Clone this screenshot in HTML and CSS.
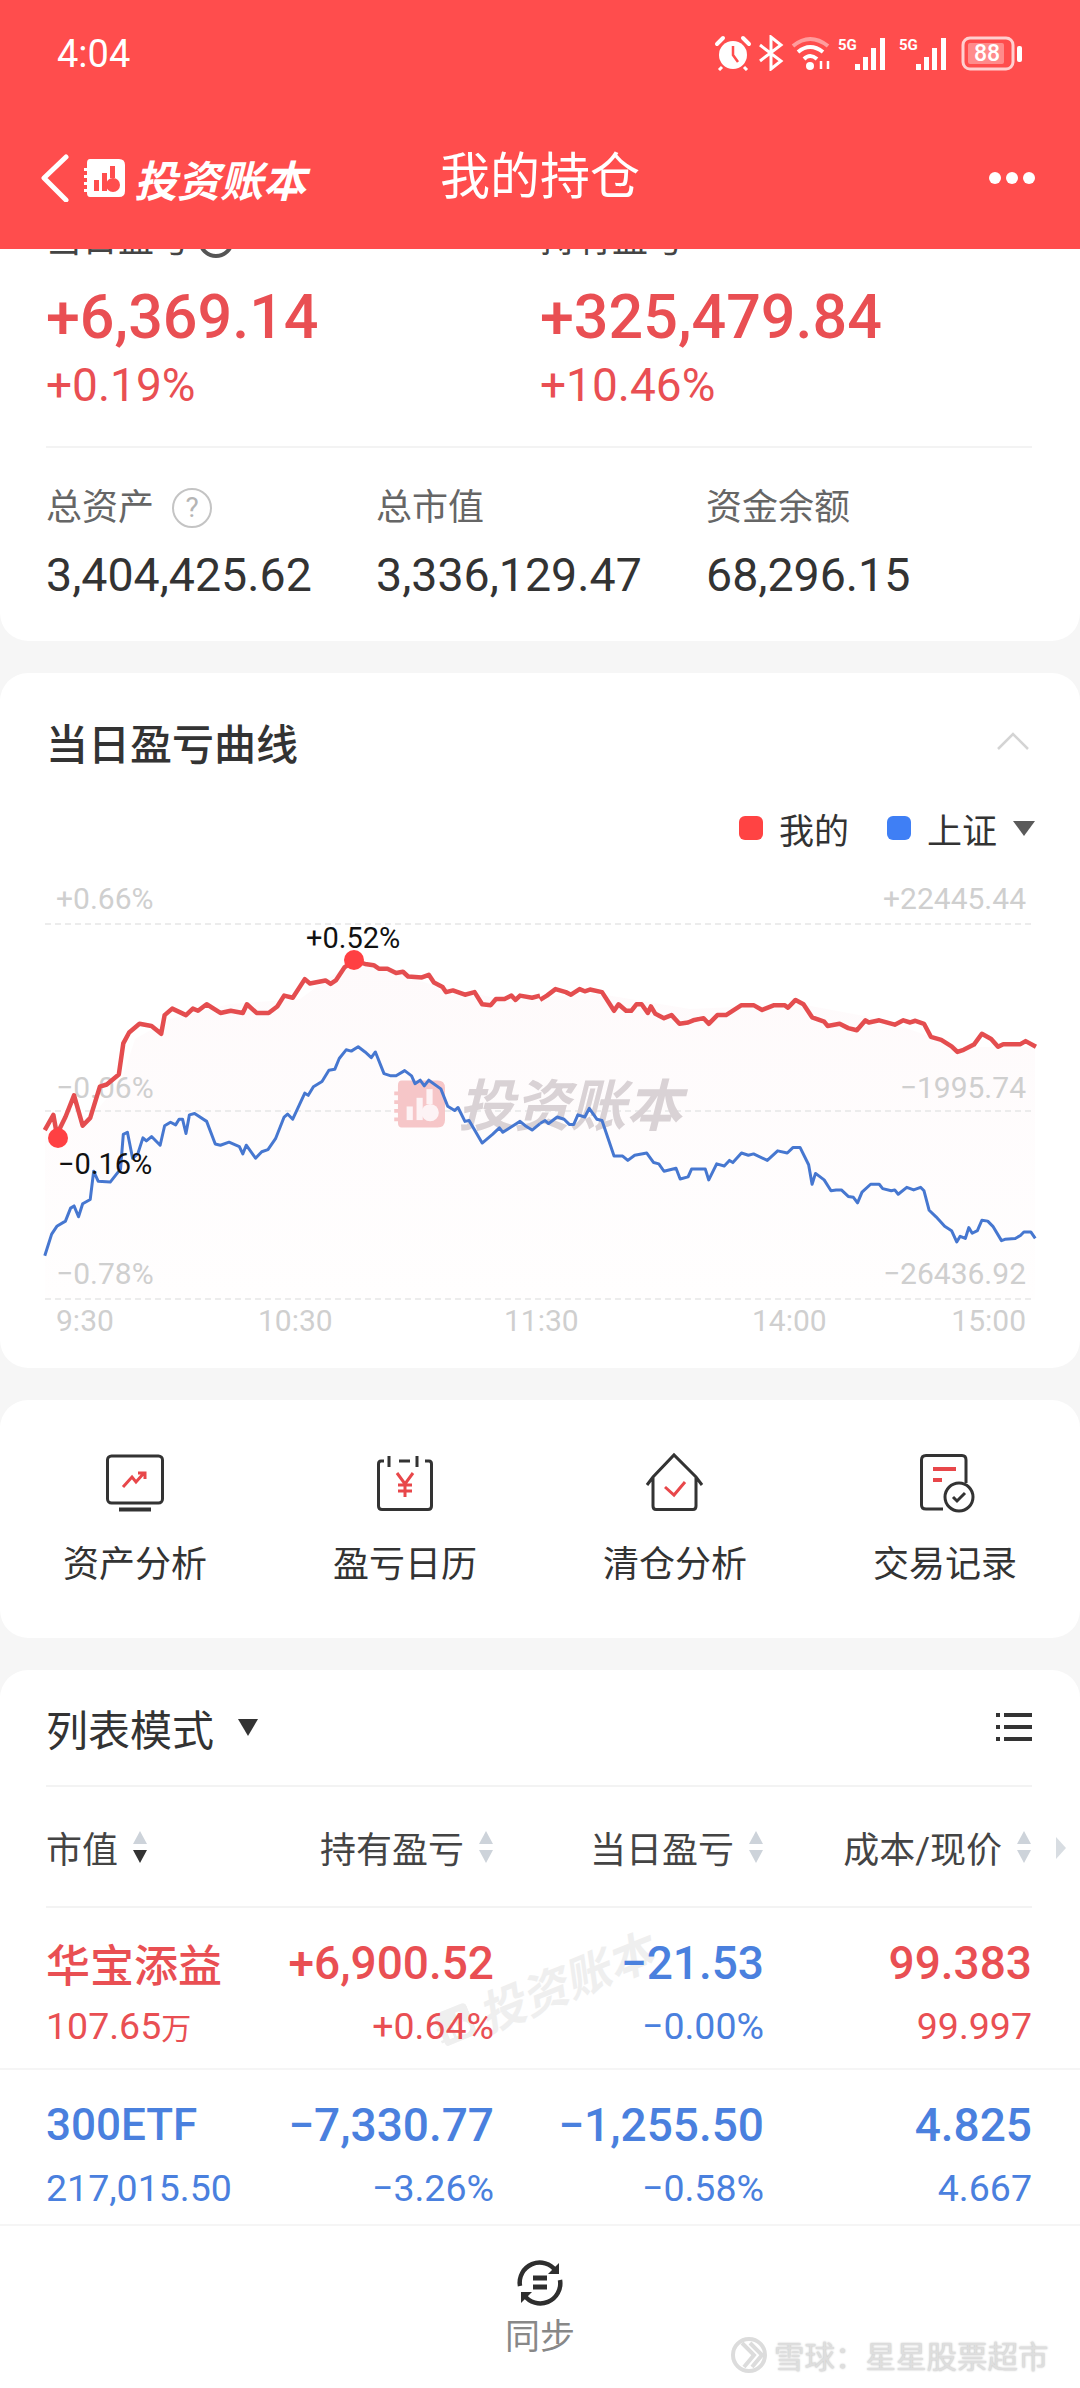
FILE: index.html
```html
<!DOCTYPE html>
<html lang="zh-CN">
<head>
  <meta charset="UTF-8">
  <meta name="viewport" content="width=device-width, initial-scale=1.0">
  <title>我的持仓</title>
  <link rel="stylesheet" href="styles.css">
</head>
<body>

<svg class="defs" width="0" height="0">
  <symbol id="logo" viewBox="0 0 42 38">
    <path d="M7 0H36Q42 0 42 6V32Q42 38 36 38H7Q4 38 4 34V33H1V30H4V26H1V23H4V19H1V16H4V12H1V9H4V4Q4 0 7 0Z"/>
    <g class="logo-cut">
      <rect x="11" y="21" width="5" height="11"/>
      <rect x="19" y="14" width="5" height="18"/>
      <rect x="27" y="7" width="5" height="12"/>
      <circle cx="30" cy="26" r="7"/>
    </g>
  </symbol>
</svg>

<div class="page">

  <!-- Red header -->
  <header class="header">
    <div class="status-bar">
      <span class="time">4:04</span>
      <svg class="status-icons" width="310" height="36" viewBox="0 0 310 36">
        <!-- alarm -->
        <circle cx="20" cy="20" r="14" fill="#fff"/>
        <path d="M20 11V20L25 27" fill="none" stroke="#ff4d4d" stroke-width="2.5"/>
        <path d="M4 9L10 3M36 9L30 3" stroke="#fff" stroke-width="4" stroke-linecap="round"/>
        <path d="M9 32L6 35M31 32L34 35" stroke="#fff" stroke-width="3"/>
        <!-- bluetooth -->
        <path d="M47 10L68 26L58 34V2L68 10L47 26" fill="none" stroke="#fff" stroke-width="3"/>
        <!-- wifi -->
        <path d="M80 11Q97 -3 115 11" fill="none" stroke="#fff" stroke-opacity=".45" stroke-width="4"/>
        <path d="M85 17Q97 7 110 17M91 24Q97 18 104 24" fill="none" stroke="#fff" stroke-width="4"/>
        <circle cx="97" cy="31" r="4" fill="#fff"/>
        <path d="M108 34V26M115 26V34" stroke="#fff" stroke-width="2.5"/>
        <!-- sim 1 -->
        <text class="net" x="125" y="15">5G</text>
        <g fill="#fff">
          <rect x="142" y="29" width="5" height="6"/>
          <rect x="150" y="22" width="5" height="13"/>
          <rect x="158" y="13" width="5" height="22"/>
          <rect x="167" y="3" width="5" height="32"/>
        </g>
        <!-- sim 2 -->
        <text class="net" x="186" y="15">5G</text>
        <g fill="#fff">
          <rect x="203" y="29" width="5" height="6"/>
          <rect x="211" y="22" width="5" height="13"/>
          <rect x="219" y="13" width="5" height="22"/>
          <rect x="228" y="3" width="5" height="32"/>
        </g>
        <!-- battery -->
        <rect x="250" y="3" width="50" height="31" rx="7" fill="none" stroke="#ffd0d0" stroke-width="3"/>
        <rect x="255" y="8" width="36" height="21" rx="2" fill="#fff" fill-opacity=".35"/>
        <text class="batt" x="274" y="26">88</text>
        <rect x="304" y="11" width="5" height="16" rx="2" fill="#fff"/>
      </svg>
    </div>
    <div class="nav-bar">
      <div class="nav-left">
        <svg width="30" height="48" viewBox="0 0 30 48"><path d="M26 3L4 24L26 46" fill="none" stroke="#fff" stroke-width="5" stroke-linecap="round" stroke-linejoin="round"/></svg>
        <svg class="nav-logo" width="42" height="38"><use href="#logo"/></svg>
        <span class="nav-brand">投资账本</span>
      </div>
      <span class="nav-title">我的持仓</span>
      <div class="nav-more"><i></i><i></i><i></i></div>
    </div>
  </header>

  <main class="main">

    <!-- Summary -->
    <section class="card summary">
      <div class="summary-top">
        <div class="summary-col">
          <div class="label label-dark">当日盈亏<span class="help help-dark">?</span></div>
          <div class="big red">+6,369.14</div>
          <div class="pct red">+0.19%</div>
        </div>
        <div class="summary-col">
          <div class="label label-dark">持有盈亏</div>
          <div class="big red">+325,479.84</div>
          <div class="pct red">+10.46%</div>
        </div>
      </div>
      <div class="summary-bottom">
        <div>
          <div class="label">总资产<span class="help">?</span></div>
          <div class="amount">3,404,425.62</div>
        </div>
        <div>
          <div class="label">总市值</div>
          <div class="amount">3,336,129.47</div>
        </div>
        <div>
          <div class="label">资金余额</div>
          <div class="amount">68,296.15</div>
        </div>
      </div>
    </section>

    <!-- Chart -->
    <section class="card chart-card">
      <div class="chart-title">
        <h3>当日盈亏曲线</h3>
        <svg width="34" height="20" viewBox="0 0 34 20"><path d="M2 18L17 3L32 18" fill="none" stroke="#d4d4d4" stroke-width="2.5"/></svg>
      </div>
      <div class="legend">
        <i class="swatch swatch-red"></i><span>我的</span>
        <i class="swatch swatch-blue"></i><span>上证</span>
        <i class="legend-arrow"></i>
      </div>
      <svg class="chart" width="1080" height="500" viewBox="0 860 1080 500">
        <defs>
          <linearGradient id="tint" x1="0" y1="0" x2="0" y2="1">
            <stop offset="0" stop-color="#fefafb"/>
            <stop offset="1" stop-color="#fffefe"/>
          </linearGradient>
        </defs>
        <polygon fill="url(#tint)" points="45,1131 70,1110 90,1120 122,1080 135,1040 170,1020 230,1005 300,1000 354,961 430,985 500,1000 600,995 690,1010 800,1005 880,1020 960,1048 1035,1048 1035,1300 45,1300"/>

        <g class="grid">
          <line x1="45" y1="925" x2="1032" y2="925"/>
          <line x1="45" y1="1112" x2="1032" y2="1112"/>
          <line x1="45" y1="1300" x2="1032" y2="1300"/>
        </g>

        <text class="axis" x="56" y="910">+0.66%</text>
        <text class="axis" x="56" y="1099">−0.06%</text>
        <text class="axis" x="56" y="1285">−0.78%</text>
        <text class="axis end" x="1026" y="910">+22445.44</text>
        <text class="axis end" x="1026" y="1099">−1995.74</text>
        <text class="axis end" x="1026" y="1285">−26436.92</text>
        <text class="axis" x="56" y="1332">9:30</text>
        <text class="axis" x="258" y="1332">10:30</text>
        <text class="axis" x="504" y="1332">11:30</text>
        <text class="axis" x="752" y="1332">14:00</text>
        <text class="axis end" x="1026" y="1332">15:00</text>

        <!-- watermark -->
        <svg class="mark-logo" x="393" y="1078" width="52" height="54"><use href="#logo"/></svg>
        <text class="mark-text" x="458" y="1127">投资账本</text>

        <!-- curves, points traced in reference crop units -->
        <g transform="translate(0 680) scale(.3444 .4337)">
          <polyline class="line-blue" points="130,1330 150,1280 165,1262 190,1250 205,1220 215,1215 228,1240 240,1210 262,1200 272,1135 285,1158 320,1160 340,1140 350,1130 358,1050 370,1045 385,1105 400,1095 415,1058 425,1065 440,1055 465,1075 478,1030 495,1022 510,1028 520,1015 530,1015 540,1048 550,1005 565,1002 600,1020 625,1072 640,1075 665,1068 695,1078 705,1095 715,1075 742,1105 760,1090 778,1085 800,1060 825,1010 835,1003 850,1015 885,955 895,960 910,940 935,928 955,902 972,900 985,875 1005,855 1020,858 1040,848 1060,860 1078,873 1090,860 1115,910 1135,915 1150,915 1175,903 1195,915 1205,933 1220,925 1232,938 1245,925 1280,945 1300,985 1320,995 1330,988 1350,1020 1362,1018 1400,1070 1430,1050 1450,1035 1460,1045 1500,1025 1510,1020 1525,1030 1545,1040 1568,1025"/>
          <polyline class="line-red" points="130,1040 155,1005 165,1050 190,1010 215,960 240,1030 262,1012 290,940 310,935 345,912 358,840 375,815 405,795 440,800 468,818 478,775 500,760 540,775 560,760 575,765 600,750 640,770 670,765 705,770 717,750 745,770 780,770 805,755 825,730 850,735 885,692 900,702 945,695 960,703 975,695 1000,665 1028,650 1060,657 1085,660 1100,668 1125,668 1150,678 1170,675 1185,686 1225,688 1245,682 1260,700 1285,710 1295,722 1315,718 1350,728 1378,722 1400,750 1425,752 1440,738 1465,738 1485,730 1497,740 1510,730 1545,735 1568,730"/>
        </g>
        <g transform="translate(540 680) scale(.3444 .4337)">
          <polyline class="line-blue" points="0,1025 15,1018 25,1025 50,1010 70,1015 85,1027 98,1027 110,1005 130,1010 143,990 165,1015 180,1018 215,1100 240,1100 255,1110 275,1098 310,1093 330,1115 345,1118 360,1135 395,1128 407,1153 430,1148 440,1130 480,1130 490,1155 513,1118 535,1123 550,1110 560,1115 585,1093 605,1098 620,1095 660,1110 690,1088 718,1093 735,1080 755,1080 780,1120 790,1165 800,1140 825,1155 845,1180 860,1178 875,1178 895,1193 910,1195 922,1208 935,1183 960,1165 985,1165 995,1175 1020,1180 1030,1178 1040,1188 1065,1172 1085,1178 1105,1172 1115,1180 1130,1225 1150,1240 1175,1262 1195,1272 1210,1298 1220,1285 1235,1290 1245,1265 1255,1278 1270,1272 1283,1248 1300,1250 1315,1262 1340,1295 1350,1292 1380,1290 1395,1283 1405,1275 1425,1275 1438,1290"/>
          <polyline class="line-red" points="0,740 20,730 45,715 75,722 90,728 115,715 130,720 145,716 180,722 215,765 228,750 250,765 265,765 280,750 295,750 313,770 322,755 335,772 360,782 382,775 405,795 430,792 445,787 475,782 490,795 515,775 540,775 585,752 620,752 645,763 680,752 710,752 720,758 742,740 765,750 790,780 825,790 835,800 870,795 895,805 920,810 945,787 955,792 985,787 1030,797 1055,787 1075,792 1090,788 1115,795 1135,825 1165,832 1195,847 1212,860 1230,855 1260,843 1283,818 1310,830 1330,848 1345,842 1395,842 1410,835 1440,848"/>
        </g>

        <circle class="dot" cx="354" cy="961" r="10"/>
        <circle class="dot" cx="58" cy="1139" r="10"/>
        <text class="note" x="306" y="949">+0.52%</text>
        <text class="note" x="58" y="1175">−0.16%</text>
      </svg>
    </section>

    <!-- Shortcuts -->
    <section class="card shortcuts">
      <div class="shortcut">
        <svg width="64" height="64" viewBox="0 0 64 64" fill="none" stroke-width="3">
          <rect class="ico" x="4.5" y="6" width="55" height="47" rx="4"/>
          <path class="ico" d="M16 59.5H48" stroke-width="4"/>
          <path class="ico-red" d="M20 37L29 27L33 32L41 23M35 23H42V29"/>
        </svg>
        <span>资产分析</span>
      </div>
      <div class="shortcut">
        <svg width="64" height="64" viewBox="0 0 64 64" fill="none" stroke-width="3">
          <path class="ico" d="M11 11H8Q5.5 11 5.5 14V56Q5.5 59.5 9 59.5H55Q58.5 59.5 58.5 56V14Q58.5 11 56 11H52M16 6V17M44 6V17M26 11H37"/>
          <path class="ico-red" d="M24 23L32 34L40 23M32 34V47M25 35H39M25 41H39"/>
        </svg>
        <span>盈亏日历</span>
      </div>
      <div class="shortcut">
        <svg width="64" height="64" viewBox="0 0 64 64" fill="none" stroke-width="3">
          <path class="ico" d="M4 35L10 27L31 5L53 27L59 35M10 27V56Q10 59.5 13 59.5H50Q53 59.5 53 56V27"/>
          <path class="ico-red" d="M22 37L31 45L42 32"/>
        </svg>
        <span>清仓分析</span>
      </div>
      <div class="shortcut">
        <svg width="64" height="64" viewBox="0 0 64 64" fill="none" stroke-width="3">
          <path class="ico" d="M30 59H13Q8.5 59 8.5 55V10Q8.5 5.5 13 5.5H49Q53 5.5 53 10V33"/>
          <path class="ico-red" d="M20 19H43M20 30H29" stroke-width="4"/>
          <circle class="ico" cx="46" cy="47" r="14"/>
          <path class="ico" d="M40 47L44 51L52 43"/>
        </svg>
        <span>交易记录</span>
      </div>
    </section>

    <!-- Holdings list -->
    <section class="card holdings">
      <div class="list-mark">
        <svg width="38" height="36"><use href="#logo"/></svg>
        <span>投资账本</span>
      </div>

      <div class="list-head">
        <div class="list-mode"><span>列表模式</span><i class="mode-arrow"></i></div>
        <svg width="36" height="28" viewBox="0 0 36 28" fill="#333">
          <rect x="0" y="0" width="4" height="4"/><rect x="8" y="0" width="28" height="4"/>
          <rect x="0" y="12" width="4" height="4"/><rect x="8" y="12" width="28" height="4"/>
          <rect x="0" y="24" width="4" height="4"/><rect x="8" y="24" width="28" height="4"/>
        </svg>
      </div>

      <div class="table-head">
        <div class="th th-left">市值<svg class="sort" width="16" height="34" viewBox="0 0 16 34"><path d="M8 1L15 14H1Z" fill="#cdd3da"/><path d="M8 33L1 20H15Z" fill="#333"/></svg></div>
        <div class="th">持有盈亏<svg class="sort" width="16" height="34" viewBox="0 0 16 34"><path d="M8 1L15 14H1Z" fill="#cdd3da"/><path d="M8 33L1 20H15Z" fill="#cdd3da"/></svg></div>
        <div class="th">当日盈亏<svg class="sort" width="16" height="34" viewBox="0 0 16 34"><path d="M8 1L15 14H1Z" fill="#cdd3da"/><path d="M8 33L1 20H15Z" fill="#cdd3da"/></svg></div>
        <div class="th">成本/现价<svg class="sort" width="16" height="34" viewBox="0 0 16 34"><path d="M8 1L15 14H1Z" fill="#cdd3da"/><path d="M8 33L1 20H15Z" fill="#cdd3da"/></svg></div>
        <i class="more-arrow"></i>
      </div>

      <div class="stock">
        <div class="name red">华宝添益</div>
        <div class="num red">+6,900.52</div>
        <div class="num blue">−21.53</div>
        <div class="num red">99.383</div>
        <div class="sub red">107.65<span class="unit">万</span></div>
        <div class="sub sub-right red">+0.64%</div>
        <div class="sub sub-right blue">−0.00%</div>
        <div class="sub sub-right red">99.997</div>
      </div>

      <div class="stock">
        <div class="name-en blue">300ETF</div>
        <div class="num blue">−7,330.77</div>
        <div class="num blue">−1,255.50</div>
        <div class="num blue">4.825</div>
        <div class="sub blue">217,015.50</div>
        <div class="sub sub-right blue">−3.26%</div>
        <div class="sub sub-right blue">−0.58%</div>
        <div class="sub sub-right blue">4.667</div>
      </div>
    </section>
  </main>

  <!-- Bottom action -->
  <footer class="footer">
    <svg width="48" height="48" viewBox="0 0 48 48" fill="none" stroke="#2e2e2e" stroke-width="4.5">
      <path d="M4 27A20 20 0 0 1 40 12"/>
      <path d="M44 21A20 20 0 0 1 8 36"/>
      <path d="M43 4V15H32L43 4Z" fill="#2e2e2e" stroke="none"/>
      <path d="M5 44V33H16L5 44Z" fill="#2e2e2e" stroke="none"/>
      <path d="M17 19H31M17 28H31" stroke-width="5"/>
    </svg>
    <span>同步</span>
  </footer>

  <div class="snow-mark">
    <svg width="38" height="52" viewBox="0 0 38 52" fill="none" stroke="#dcdcdc" stroke-width="4"><circle cx="19" cy="26" r="16"/><path d="M12 14L24 26L14 38M20 14L32 26L22 38"/></svg>
    <span>雪球：星星股票超市</span>
  </div>
</div>

</body>
</html>
```

FILE: styles.css
```css
* {
  box-sizing: border-box;
}
html, body {
  margin: 0;
  padding: 0;
}
body {
  font-family: Roboto, "Noto Sans CJK SC", sans-serif;
  color: #333;
  background: #f6f6f6;
}
h3 {
  margin: 0;
  font-size: 42px;
  font-weight: 500;
}
.defs {
  position: absolute;
}
.logo-cut {
  fill: var(--cut, #ff4d4d);
}
.page {
  position: relative;
  width: 1080px;
  height: 2388px;
  display: flex;
  flex-direction: column;
  overflow: hidden;
}
.red {
  color: #e94f53;
}
.blue {
  color: #4a80de;
}

/* header */
.header {
  height: 249px;
  flex: none;
  background: #ff4d4d;
  color: #fff;
}
.status-bar {
  height: 106px;
  padding: 35px 55px 0 57px;
  display: flex;
  justify-content: space-between;
  align-items: flex-start;
}
.time {
  font-size: 38px;
  line-height: 38px;
}
.status-icons {
  margin-right: 2px;
}
.net {
  font-size: 15px;
  font-weight: 700;
  fill: #fff;
}
.batt {
  font-size: 23px;
  font-weight: 500;
  fill: #fff;
  text-anchor: middle;
}
.nav-bar {
  height: 143px;
  padding: 0 45px 0 40px;
  display: flex;
  align-items: center;
  position: relative;
}
.nav-left {
  display: flex;
  align-items: center;
}
.nav-logo {
  margin-left: 13px;
  fill: #fff;
}
.nav-brand {
  margin-left: 9px;
  font-size: 43px;
  font-weight: 700;
  font-style: italic;
}
.nav-title {
  position: absolute;
  left: 0;
  right: 0;
  top: 0;
  line-height: 143px;
  text-align: center;
  font-size: 50px;
}
.nav-more {
  margin-left: auto;
  display: flex;
  gap: 5px;
}
.nav-more i {
  width: 12px;
  height: 12px;
  border-radius: 50%;
  background: #fff;
}

/* main area */
.main {
  flex: 1;
  min-height: 0;
  overflow: hidden;
  display: flex;
  flex-direction: column;
  gap: 32px;
}
.card {
  background: #fff;
  border-radius: 28px;
  flex: none;
}

/* summary */
.summary {
  margin-top: -29px;
  height: 421px;
  padding: 0 48px 0 46px;
  border-radius: 0 0 28px 28px;
}
.summary-top {
  display: grid;
  grid-template-columns: 494px 1fr;
  height: 228px;
  border-bottom: 2px solid #f3f3f3;
}
.label {
  height: 40px;
  line-height: 40px;
  font-size: 36px;
  color: #666;
  display: flex;
  align-items: center;
}
.label-dark {
  color: #444;
}
.help {
  width: 40px;
  height: 40px;
  margin-left: 18px;
  border: 2px solid #c4c4c4;
  border-radius: 50%;
  color: #b5b5b5;
  font-size: 28px;
  line-height: 36px;
  text-align: center;
}
.help-dark {
  width: 36px;
  height: 36px;
  margin-left: 8px;
  border: 4px solid #555;
  color: #555;
  font-size: 20px;
  line-height: 28px;
}
.big {
  margin-top: 21px;
  font-size: 61px;
  line-height: 72px;
  font-weight: 500;
}
.pct {
  margin-top: 7px;
  font-size: 46px;
  line-height: 50px;
}
.summary-bottom {
  margin-top: 40px;
  display: grid;
  grid-template-columns: 330px 330px 1fr;
}
.amount {
  margin-top: 17px;
  font-size: 46.5px;
  line-height: 60px;
  color: #333;
}

/* chart */
.chart-card {
  height: 695px;
  padding-top: 38px;
}
.chart-title {
  height: 60px;
  padding: 0 50px 0 46px;
  display: flex;
  justify-content: space-between;
  align-items: center;
}
.legend {
  height: 40px;
  margin-top: 37px;
  padding-right: 45px;
  display: flex;
  justify-content: flex-end;
  align-items: center;
  font-size: 35px;
  color: #333;
}
.swatch {
  width: 24px;
  height: 24px;
  margin-right: 16px;
  border-radius: 6px;
}
.swatch-red {
  background: #ff4343;
}
.swatch-blue {
  margin-left: 38px;
  background: #3f7ff5;
}
.legend-arrow {
  margin-left: 16px;
  width: 0;
  height: 0;
  border-left: 11px solid transparent;
  border-right: 11px solid transparent;
  border-top: 15px solid #5a5a5a;
}
.chart {
  display: block;
  margin-top: 11px;
}
.grid line {
  stroke: #e6e6e6;
  stroke-width: 1.5;
  stroke-dasharray: 6 4;
}
.axis {
  font-size: 30px;
  fill: #cfcfcf;
}
.end {
  text-anchor: end;
}
.mark-logo {
  fill: #f6c6c8;
  --cut: #fdf3f5;
}
.mark-text {
  font-size: 56px;
  font-weight: 700;
  font-style: italic;
  fill: #d9d2d5;
}
.line-red,
.line-blue {
  fill: none;
  stroke-linejoin: round;
  vector-effect: non-scaling-stroke;
}
.line-red {
  stroke: #e44d4f;
  stroke-width: 4.5;
}
.line-blue {
  stroke: #4677d0;
  stroke-width: 3;
}
.dot {
  fill: #ff4043;
}
.note {
  font-size: 29px;
  fill: #111;
}

/* shortcuts */
.shortcuts {
  height: 238px;
  padding-top: 50px;
  display: grid;
  grid-template-columns: repeat(4, 270px);
}
.shortcut {
  display: flex;
  flex-direction: column;
  align-items: center;
  gap: 29px;
}
.shortcut span {
  font-size: 36px;
  line-height: 44px;
  color: #333;
}
.ico {
  stroke: #333;
}
.ico-red {
  stroke: #e8474a;
}

/* holdings */
.holdings {
  position: relative;
  flex: 1;
  border-radius: 28px 28px 0 0;
}
.list-head {
  height: 117px;
  margin: 0 48px 0 46px;
  padding-bottom: 1px;
  border-bottom: 2px solid #f3f3f3;
  display: flex;
  justify-content: space-between;
  align-items: center;
}
.list-mode {
  display: flex;
  align-items: center;
  font-size: 42px;
  color: #333;
}
.mode-arrow {
  margin-left: 24px;
  width: 0;
  height: 0;
  border-left: 10px solid transparent;
  border-right: 10px solid transparent;
  border-top: 17px solid #333;
}
.table-head {
  position: relative;
  height: 121px;
  margin: 0 48px 0 46px;
  border-bottom: 2px solid #f3f3f3;
  display: grid;
  grid-template-columns: 200px 248px 270px 268px;
  align-items: center;
}
.th {
  display: flex;
  justify-content: flex-end;
  align-items: center;
  gap: 14px;
  font-size: 36px;
  color: #444;
}
.th-left {
  justify-content: flex-start;
}
.th .sort {
  flex: none;
}
.more-arrow {
  position: absolute;
  left: 1010px;
  top: 50px;
  width: 0;
  height: 0;
  border-top: 11px solid transparent;
  border-bottom: 11px solid transparent;
  border-left: 10px solid #d8dde2;
}
.stock {
  position: relative;
  height: 162px;
  padding: 25px 48px 0 46px;
  border-bottom: 2px solid #f5f5f5;
  display: grid;
  grid-template-columns: 200px 248px 270px 268px;
  grid-template-rows: 60px 66px;
  align-items: center;
}
.stock + .stock {
  height: 156px;
}
.name,
.name-en {
  font-size: 44px;
  font-weight: 500;
}
.num {
  font-size: 46px;
  font-weight: 500;
  text-align: right;
}
.sub {
  font-size: 37.5px;
}
.unit {
  font-size: 30px;
}
.sub-right {
  text-align: right;
}
.list-mark {
  position: absolute;
  left: 428px;
  top: 286px;
  display: flex;
  align-items: center;
  gap: 8px;
  font-size: 46px;
  font-weight: 700;
  font-style: italic;
  color: #efefef;
  fill: #efefef;
  --cut: #fff;
  transform: rotate(-22deg);
}

/* footer */
.footer {
  height: 162px;
  flex: none;
  background: #fff;
  padding-top: 33px;
  display: flex;
  flex-direction: column;
  align-items: center;
  gap: 9px;
}
.footer span {
  font-size: 35px;
  line-height: 44px;
  color: #888;
}
.snow-mark {
  position: absolute;
  left: 730px;
  top: 2329px;
  display: flex;
  align-items: center;
  gap: 6px;
  font-size: 30.5px;
  color: #dedede;
  text-shadow: 0 0 2px #bbb;
}
```
